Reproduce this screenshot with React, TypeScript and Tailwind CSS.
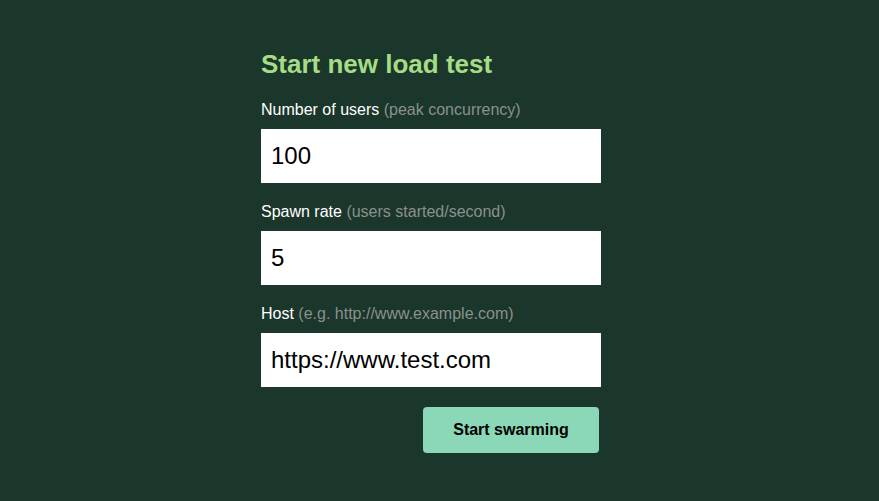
export default function App() {
  const fields = [
    { label: "Number of users", hint: "(peak concurrency)", value: "100" },
    { label: "Spawn rate", hint: "(users started/second)", value: "5" },
    { label: "Host", hint: "(e.g. http://www.example.com)", value: "https://www.test.com" },
  ];

  return (
    <div className="min-h-[501px] w-full bg-[#1b362b] font-['Liberation_Sans',Arial,sans-serif]">
      <div className="ml-[261px] w-[340px] pt-[49px]">
        <h2 className="text-[26px] leading-[30px] font-bold text-[#a5dc84]">
          Start new load test
        </h2>
        <form className="mt-[21px] flex flex-col">
          {fields.map((f, i) => (
            <label key={f.label} className={`flex flex-col ${i > 0 ? "mt-[19px]" : ""}`}>
              <span className="text-[16px] leading-[20px] text-white">
                {f.label} <span className="text-[#8a918d]">{f.hint}</span>
              </span>
              <input
                readOnly
                value={f.value}
                className="mt-[9px] h-[54px] w-[340px] bg-white px-[10px] text-[24px] text-black outline-none"
              />
            </label>
          ))}
          <div className="mt-[20px] flex justify-end pr-[2px]">
            <button
              type="button"
              className="h-[46px] w-[176px] rounded-[4px] bg-[#8ad8b7] text-[16px] font-bold text-black"
            >
              Start swarming
            </button>
          </div>
        </form>
      </div>
    </div>
  );
}
